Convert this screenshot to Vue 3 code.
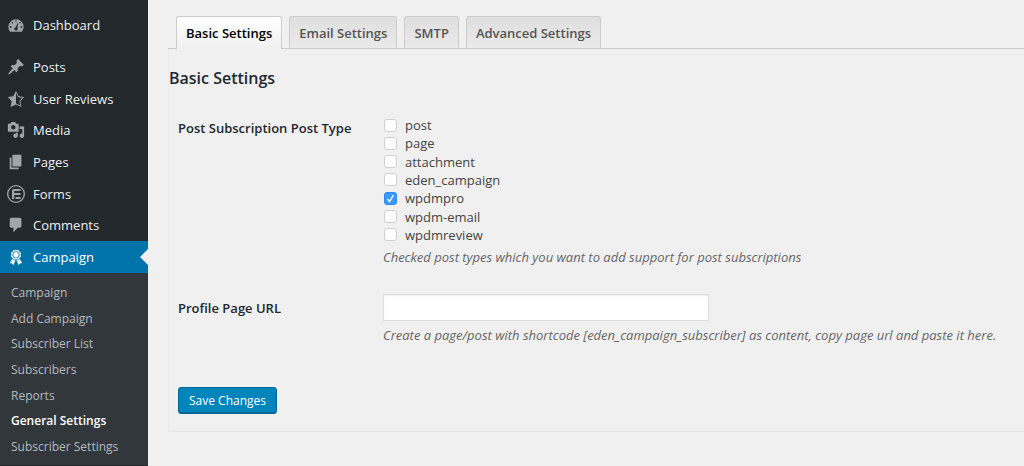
<script setup>
import { ref } from 'vue'

const topItems = [
  {
    label: 'Posts',
    path: 'M10.44 3.02l1.82-1.82 6.36 6.35-1.83 1.82c-1.05-.68-2.48-.57-3.41.36l-.75.75c-.92.93-1.04 2.35-.35 3.41l-1.83 1.82-2.41-2.41-2.8 2.79c-.42.42-3.38 2.71-3.8 2.29s1.86-3.39 2.28-3.81l2.79-2.79L4.1 9.36l1.83-1.82c1.05.69 2.48.57 3.4-.36l.75-.75c.93-.92 1.05-2.35.36-3.41z'
  },
  {
    label: 'User Reviews',
    path: 'M10 1L7 7l-6 .75 4.13 4.62L4 19l6-3 6 3-1.12-6.63L19 7.75 13 7zm0 2.24l2.34 4.69 4.65.58-3.18 3.56.87 5.15L10 14.88V3.24z'
  },
  {
    label: 'Media',
    path: 'M13 11V4c0-.55-.45-1-1-1h-1.67L9 1H5L3.67 3H2c-.55 0-1 .45-1 1v7c0 .55.45 1 1 1h10c.55 0 1-.45 1-1zM7 4.5c1.38 0 2.5 1.12 2.5 2.5S8.38 9.5 7 9.5 4.5 8.38 4.5 7 5.62 4.5 7 4.5zM14 6h5v10.5c0 1.38-1.12 2.5-2.5 2.5S14 17.88 14 16.5s1.12-2.5 2.5-2.5c.17 0 .34.02.5.05V9h-3V6zm-4 8.05V13h2v3.5c0 1.38-1.12 2.5-2.5 2.5S7 17.88 7 16.5 8.12 14 9.5 14c.17 0 .34.02.5.05z'
  },
  { label: 'Pages', path: 'M6 15V2h10v13H6zm-1 1h8v2H3V5h2v11z' },
  {
    label: 'Forms',
    path: 'M10 0a10 10 0 1 0 0 20a10 10 0 1 0 0-20zM10 1.5a8.5 8.5 0 1 1 0 17a8.5 8.5 0 1 1 0-17zM7.5 4.4H15v2.3H8v2.200h7v2.300H8v4.400H5.600V6.300q0-1.900 1.900-1.900zM9.500 13.300H15v2.300H9.500z'
  },
  {
    label: 'Comments',
    path: 'M5 2h9c1.1 0 2 .9 2 2v7c0 1.1-.9 2-2 2h-2l-5 5v-5H5c-1.1 0-2-.9-2-2V4c0-1.1.9-2 2-2z'
  },
  {
    label: 'Campaign',
    current: true,
    path: 'M4.46 5.16L5 7.46l-.54 2.29 2.01 1.24L7.7 13l2.3-.54 2.3.54 1.23-2.01 2.01-1.24L15 7.46l.54-2.3-2-1.24-1.24-2.01-2.3.55-2.29-.54-1.25 2zm5.55 6.34c-2.21 0-4-1.79-4-4 0-2.2 1.79-4 4-4s4 1.8 4 4c0 2.21-1.79 4-4 4zm-.02-1C8.33 10.5 7 9.16 7 7.5c0-1.65 1.33-3 2.99-3S13 5.85 13 7.5c0 1.66-1.35 3-3.01 3zm3.84 1.1l-1.28 2.24-2.08-.47L13 19.2l1.4-2.2h2.5zm-7.7.07l1.25 2.25 2.13-.51L7 19.2 5.6 17H3.1z'
  }
]

const subItems = [
  'Campaign',
  'Add Campaign',
  'Subscriber List',
  'Subscribers',
  'Reports',
  'General Settings',
  'Subscriber Settings'
]

const tabs = ['Basic Settings', 'Email Settings', 'SMTP', 'Advanced Settings']

const postTypes = ['post', 'page', 'attachment', 'eden_campaign', 'wpdmpro', 'wpdm-email', 'wpdmreview']
const selected = ref(['wpdmpro'])
const profileUrl = ref('')
</script>

<template>
  <div class="admin">
    <nav class="sidebar" aria-label="Main menu">
      <a href="#" class="item dashboard">
        <svg class="icon" viewBox="0 0 20 20" aria-hidden="true">
          <path fill-rule="evenodd" d="M3.4 17.5h13.2A8.300 8.300 0 0 0 18.500 12a8.500 8.500 0 0 0-17 0c0 2.100.7 4 1.900 5.500zM9.200 5.500a.8.8 0 1 1 1.600 0a.8.8 0 1 1-1.600 0zM5 7.500a.9.9 0 1 1 1.800 0a.9.9 0 1 1-1.800 0zM13.600 7.500a.9.9 0 1 1 1.800 0a.9.9 0 1 1-1.800 0zM3 12.200a1 1 0 1 1 2 0a1 1 0 1 1-2 0zM15 12.200a1 1 0 1 1 2 0a1 1 0 1 1-2 0zM11.600 8l.7.300-.7 5q1 2.700-1.600 2.900-2.300-.2-1.800-2.400.3-.9 1.600-1.400z" />
        </svg>
        <span>Dashboard</span>
      </a>
      <ul class="menu">
        <li v-for="item in topItems" :key="item.label">
          <a href="#" class="item" :class="{ current: item.current }">
            <svg class="icon" viewBox="0 0 20 20" aria-hidden="true">
              <path fill-rule="evenodd" :d="item.path" />
            </svg>
            <span>{{ item.label }}</span>
          </a>
        </li>
      </ul>
      <ul class="submenu">
        <li v-for="label in subItems" :key="label">
          <a href="#" :class="{ active: label === 'General Settings' }">{{ label }}</a>
        </li>
      </ul>
    </nav>

    <main class="content">
      <nav class="tabs" aria-label="Settings sections">
        <a v-for="(tab, i) in tabs" :key="tab" href="#" class="tab" :class="{ active: i === 0 }">{{ tab }}</a>
      </nav>
      <form class="panel" @submit.prevent>
        <h2>Basic Settings</h2>
        <div class="row" role="group" aria-labelledby="types-label">
          <span id="types-label" class="name">Post Subscription Post Type</span>
          <div class="field">
            <div class="checks">
              <label v-for="type in postTypes" :key="type" class="check">
                <input v-model="selected" type="checkbox" :value="type" />
                <span>{{ type }}</span>
              </label>
            </div>
            <p class="hint">Checked post types which you want to add support for post subscriptions</p>
          </div>
        </div>
        <div class="row url-row">
          <label class="name" for="profile-url">Profile Page URL</label>
          <div class="field">
            <input id="profile-url" v-model="profileUrl" class="text" type="text" />
            <p class="hint">Create a page/post with shortcode [eden_campaign_subscriber] as content, copy page url and paste it here.</p>
          </div>
        </div>
        <button class="save" type="submit">Save Changes</button>
      </form>
    </main>
  </div>
</template>

<style>
body {
  background: #f0f0f0;
}
</style>

<style scoped>
.admin {
  display: flex;
  min-height: 100vh;
  box-sizing: border-box;
  font-family: "Open Sans", sans-serif;
  font-size: 13px;
  line-height: 18px;
  color: #444;
}
ul {
  list-style: none;
  margin: 0;
  padding: 0;
}
.sidebar {
  flex: none;
  width: 148px;
  padding-top: 10px;
  box-sizing: border-box;
  background: #23282d;
}
.item {
  display: flex;
  align-items: center;
  gap: 8px;
  height: 100%;
  padding-left: 7px;
  color: #eee;
  text-decoration: none;
}
.dashboard {
  height: 30px;
  margin-bottom: 11px;
}
.icon {
  width: 18px;
  height: 18px;
  fill: #a0a5aa;
}
.menu {
  display: grid;
  grid-auto-rows: 1fr;
  height: 222px;
}
.current {
  position: relative;
  background: #0073aa;
  color: #fff;
}
.current .icon {
  fill: #fff;
}
.current::after {
  content: "";
  position: absolute;
  right: 0;
  top: 50%;
  margin-top: -8px;
  border: 8px solid transparent;
  border-left-width: 0;
  border-right-color: #f0f0f0;
}
.submenu {
  display: grid;
  grid-auto-rows: 1fr;
  height: 180px;
  padding: 7px 0 5px;
  background: #32373c;
  font-size: 12px;
}
.submenu a {
  display: flex;
  align-items: center;
  height: 100%;
  padding-left: 11px;
  color: #b4b9be;
  text-decoration: none;
}
.submenu a.active {
  color: #fff;
  font-weight: 600;
}
.content {
  flex: 1;
  min-width: 0;
  padding: 16px 0 0 20px;
}
.tabs {
  display: flex;
  gap: 7px;
  padding-left: 8px;
  border-bottom: 1px solid #ccc;
}
.tab {
  padding: 7px 9px 6px;
  border: 1px solid #ccc;
  border-bottom: 0;
  border-radius: 3px 3px 0 0;
  background: linear-gradient(#dfdfdf, #eaeaea);
  color: #555;
  font-weight: 600;
  text-decoration: none;
}
.tab.active {
  margin-bottom: -1px;
  padding-bottom: 7px;
  background: linear-gradient(#fff, #f0f0f0);
  color: #000;
}
.panel {
  padding: 19px 0 17px 9px;
  border-left: 1px solid #ececec;
  border-bottom: 1px solid #e5e5e5;
}
h2 {
  margin: 0 0 28px -9px;
  font-size: 16px;
  line-height: 20px;
  font-weight: 600;
  color: #23282d;
}
.row {
  display: flex;
  align-items: flex-start;
}
.name {
  flex: none;
  width: 205px;
  padding-top: 3px;
  font-weight: 600;
  color: #23282d;
}
.url-row .name {
  padding-top: 5px;
}
.field {
  flex: 1;
  min-width: 0;
}
.checks {
  display: grid;
  grid-auto-rows: 1fr;
  justify-content: start;
  height: 128px;
}
.check {
  display: flex;
  align-items: center;
  gap: 8px;
  padding-left: 1px;
}
.check input {
  appearance: none;
  width: 13px;
  height: 13px;
  margin: 0;
  box-sizing: border-box;
  border: 1px solid #cfcfcf;
  border-radius: 3px;
  background: #fff;
}
.check input:checked {
  border-color: #2b87fb;
  background: #3b99fc url("data:image/svg+xml,%3Csvg xmlns='http://www.w3.org/2000/svg' viewBox='0 0 11 11'%3E%3Cpath d='M2.5 6l2 2.5 4-6.5' fill='none' stroke='white' stroke-width='1.4'/%3E%3C/svg%3E") center / 11px 11px no-repeat;
}
.hint {
  margin: 4px 0 0;
  font-style: italic;
  color: #666;
}
.url-row {
  margin-top: 28px;
}
.text {
  display: block;
  box-sizing: border-box;
  width: 326px;
  max-width: 100%;
  height: 27px;
  padding: 3px 5px;
  border: 1px solid #ddd;
  background: #fff;
  box-shadow: inset 0 1px 2px rgba(0, 0, 0, 0.07);
  font: inherit;
}
.text + .hint {
  margin-top: 5px;
}
.save {
  display: block;
  margin-top: 43px;
  height: 27px;
  padding: 0 10px;
  border: 1px solid #006799;
  border-radius: 3px;
  background: #0085ba;
  box-shadow: inset 0 -1px 0 #006799;
  font: inherit;
  font-size: 12px;
  color: #fff;
}
</style>
